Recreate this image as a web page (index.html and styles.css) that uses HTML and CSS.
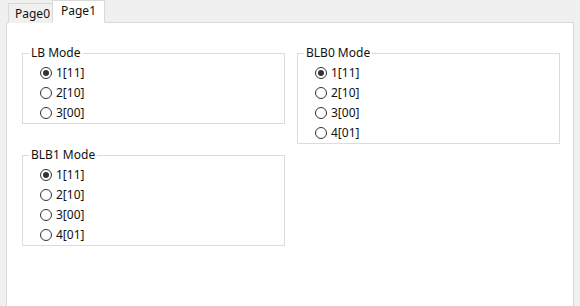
FILE: index.html
```html
<!DOCTYPE html>
<html>
<head>
<meta charset="utf-8">
<link rel="stylesheet" href="styles.css">
</head>
<body>
<div class="tabs">
  <div class="tab">Page0</div>
  <div class="tab active">Page1</div>
</div>
<div class="panel">
  <div class="col">
    <fieldset class="group">
      <legend>LB Mode</legend>
      <div class="opt"><span class="radio on"></span>1[11]</div>
      <div class="opt"><span class="radio"></span>2[10]</div>
      <div class="opt"><span class="radio"></span>3[00]</div>
    </fieldset>
    <fieldset class="group">
      <legend>BLB1 Mode</legend>
      <div class="opt"><span class="radio on"></span>1[11]</div>
      <div class="opt"><span class="radio"></span>2[10]</div>
      <div class="opt"><span class="radio"></span>3[00]</div>
      <div class="opt"><span class="radio"></span>4[01]</div>
    </fieldset>
  </div>
  <div class="col">
    <fieldset class="group">
      <legend>BLB0 Mode</legend>
      <div class="opt"><span class="radio on"></span>1[11]</div>
      <div class="opt"><span class="radio"></span>2[10]</div>
      <div class="opt"><span class="radio"></span>3[00]</div>
      <div class="opt"><span class="radio"></span>4[01]</div>
    </fieldset>
  </div>
</div>
</body>
</html>
```
FILE: styles.css
```css
html, body {
  margin: 0;
  padding: 0;
  height: 100%;
  overflow: hidden;
}
body {
  background: #f0f0f0;
  font-family: "Noto Sans", "Liberation Sans", sans-serif;
  font-size: 12px;
  color: #111;
  display: flex;
  flex-direction: column;
}
.tabs {
  display: flex;
  align-items: flex-end;
  height: 23px;
  flex: none;
  padding-left: 8px;
  position: relative;
  z-index: 1;
}
.tab {
  height: 20px;
  line-height: 20px;
  padding: 0 6px;
  border: 1px solid #d9d9d9;
  border-bottom: none;
  background: #f0f0f0;
  box-sizing: border-box;
  width: 45px;
}
.tab.active {
  height: 23px;
  line-height: 20px;
  background: #fff;
  width: 53px;
  margin-left: -1px;
  padding-left: 8px;
  border-bottom: 1px solid #fff;
}
.panel {
  flex: 1;
  min-height: 0;
  margin-left: 6px;
  margin-top: -1px;
  width: 568px;
  box-sizing: border-box;
  background: #fff;
  border: 1px solid #d9d9d9;
  border-bottom: none;
  display: flex;
  align-items: flex-start;
  gap: 12px;
  padding: 23px 0 0 15px;
}
.col {
  display: flex;
  flex-direction: column;
  gap: 24px;
  width: 263px;
}
.group {
  margin: 0;
  padding: 3px 0 0 17px;
  border: 1px solid #dcdcdc;
  min-width: 0;
}
.group legend {
  padding: 0 2px;
  margin-left: -11px;
  line-height: 14px;
  height: 14px;
}
.opt {
  height: 20px;
  display: flex;
  align-items: center;
  line-height: 20px;
}
.radio {
  width: 12px;
  height: 12px;
  border: 1px solid #333;
  border-radius: 50%;
  margin-right: 4px;
  position: relative;
  box-sizing: border-box;
}
.radio.on::after {
  content: "";
  position: absolute;
  left: 2px;
  top: 2px;
  width: 6px;
  height: 6px;
  border-radius: 50%;
  background: #333;
}
```
